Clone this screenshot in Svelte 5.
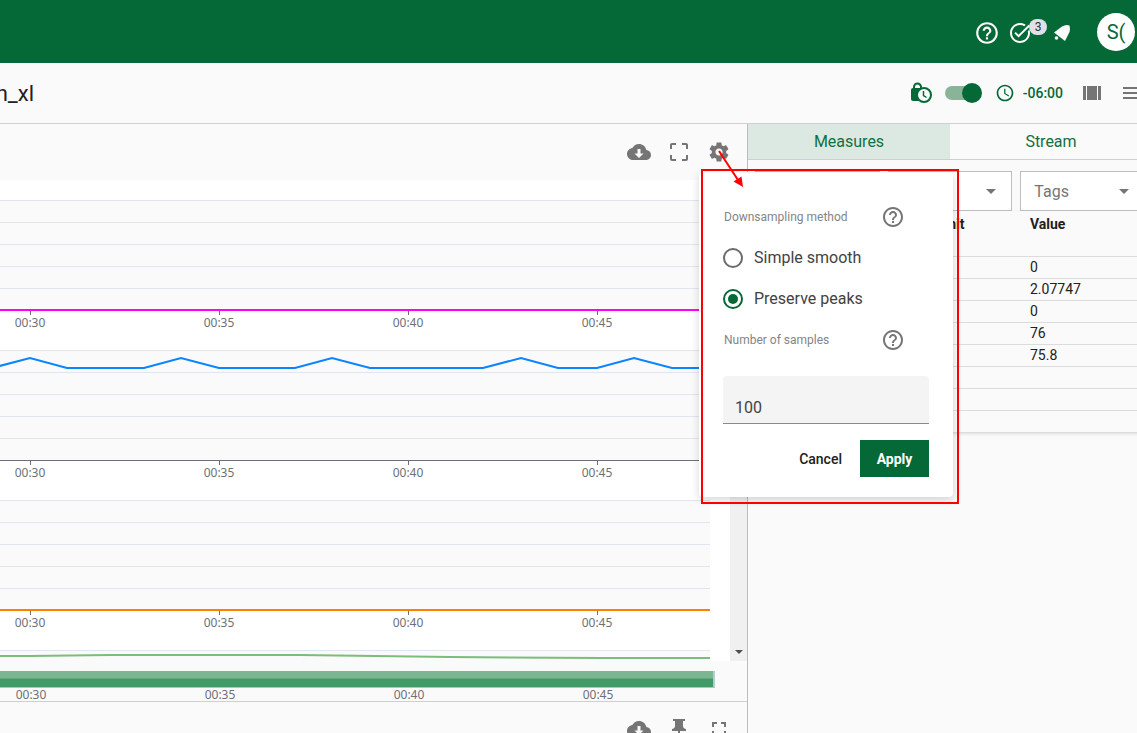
<script lang="ts">
	type Series = {
		color: string;
		points: string;
	};

	const icons = {
		help: "M11 18h2v-2h-2v2zm1-16C6.48 2 2 6.48 2 12s4.48 10 10 10 10-4.48 10-10S17.52 2 12 2zm0 18c-4.41 0-8-3.59-8-8s3.59-8 8-8 8 3.59 8 8-3.59 8-8 8zm0-14c-2.21 0-4 1.79-4 4h2c0-1.1.9-2 2-2s2 .9 2 2c0 2-3 1.75-3 5h2c0-2.25 3-2.5 3-5 0-2.21-1.79-4-4-4z",
		task: "M22 5.18L10.59 16.6l-4.24-4.24 1.41-1.41 2.83 2.83 10-10L22 5.18zm-2.21 5.04c.13.57.21 1.17.21 1.78 0 4.42-3.58 8-8 8s-8-3.58-8-8 3.58-8 8-8c1.58 0 3.04.46 4.28 1.25l1.44-1.44C16.1 2.67 14.13 2 12 2 6.48 2 2 6.48 2 12s4.48 10 10 10 10-4.48 10-10c0-1.19-.22-2.33-.6-3.39l-1.61 1.61z",
		download: "M19.35 10.04C18.67 6.59 15.64 4 12 4 9.11 4 6.6 5.64 5.35 8.04 2.34 8.36 0 10.91 0 14c0 3.31 2.69 6 6 6h13c2.76 0 5-2.24 5-5 0-2.64-2.05-4.78-4.65-4.96zM16.5 13.5L12 18l-4.5-4.5h3V9h3v4.5h3z",
		frame: "M3 5v4h2V5h4V3H5c-1.1 0-2 .9-2 2zm2 10H3v4c0 1.1.9 2 2 2h4v-2H5v-4zm14 4h-4v2h4c1.1 0 2-.9 2-2v-4h-2v4zm0-16h-4v2h4v4h2V5c0-1.1-.9-2-2-2z",
		fullscreen: "M7 14H5v5h5v-2H7v-3zm-2-4h2V7h3V5H5v5zm12 7h-3v2h5v-5h-2v3zM14 5v2h3v3h2V5h-5z",
		pin: "M16 9V4h2V2H6v2h2v5c0 1.66-1.34 3-3 3v2h6v7l1 1 1-1v-7h6v-2c-1.66 0-3-1.34-3-3z",
		settings: "M19.14 12.94c.04-.3.06-.61.06-.94 0-.32-.02-.64-.07-.94l2.03-1.58c.18-.14.23-.41.12-.61l-1.92-3.32c-.12-.22-.37-.29-.59-.22l-2.39.96c-.5-.38-1.03-.7-1.62-.94l-.36-2.54c-.04-.24-.24-.41-.48-.41h-3.84c-.24 0-.43.17-.47.41l-.36 2.54c-.59.24-1.13.57-1.62.94l-2.39-.96c-.22-.08-.47 0-.59.22L2.74 8.87c-.12.21-.08.47.12.61l2.03 1.58c-.05.3-.09.63-.09.94s.02.64.07.94l-2.03 1.58c-.18.14-.23.41-.12.61l1.92 3.32c.12.22.37.29.59.22l2.39-.96c.5.38 1.03.7 1.62.94l.36 2.54c.05.24.24.41.48.41h3.84c.24 0 .44-.17.47-.41l.36-2.54c.59-.24 1.13-.56 1.62-.94l2.39.96c.22.08.47 0 .59-.22l1.92-3.32c.12-.22.07-.47-.12-.61l-2.01-1.58zM12 15.6c-1.98 0-3.6-1.62-3.6-3.6s1.62-3.6 3.6-3.6 3.6 1.62 3.6 3.6-1.62 3.6-3.6 3.6z",
		schedule: "M11.99 2C6.47 2 2 6.48 2 12s4.47 10 9.99 10C17.52 22 22 17.52 22 12S17.52 2 11.99 2zM12 20c-4.42 0-8-3.58-8-8s3.58-8 8-8 8 3.58 8 8-3.58 8-8 8zm.5-13H11v6l5.25 3.15.75-1.23-4.5-2.67z",
	};

	const ticks = [
		{ x: 30, label: "00:30" },
		{ x: 219, label: "00:35" },
		{ x: 408, label: "00:40" },
		{ x: 597, label: "00:45" },
	];

	const series: Series[] = [
		{ color: "#ff00ff", points: "-2000,110 710,110" },
		{
			color: "#0a84ff",
			points:
				"-2000,18 -8,18 30,8 67,18 144,18 181,8 219,18 295,18 332,8 370,18 483,18 521,8 558,18 597,18 634,8 672,18 710,18",
		},
		{ color: "#ff8000", points: "-2000,110 710,110" },
		{ color: "#7bbd7b", points: "-2000,6 30,6 110,5 300,5 450,7 600,8 710,8" },
	];

	const values = ["0", "2.07747", "0", "76", "75.8", "", "", ""];
	const filters = ["", "", "Tags"];

	// charts are anchored to their right edge, where the newest samples are
	const plotRight = 710;
	let chartWidth = $state(710);
	let left = $derived(plotRight - chartWidth);

	let tab = $state("Measures");
	let method = $state("peaks");
	let samples = $state("100");
	let live = $state(true);
</script>

{#snippet icon(path: string, size = 24)}
	<svg width={size} height={size} viewBox="0 0 24 24" aria-hidden="true"><path d={path} /></svg>
{/snippet}

<div class="app">
	<header class="topbar">
		<button class="icon-button" aria-label="Help">{@render icon(icons.help, 26)}</button>
		<button class="icon-button tasks" aria-label="Tasks">
			{@render icon(icons.task)}
			<span class="badge">3</span>
		</button>
		<button class="icon-button bell" aria-label="Notifications">
			<svg width="18" height="18" viewBox="0 0 18 18" aria-hidden="true">
				<path d="M1 8.5L9 2.5Q13 0 16.5 1.5Q17.5 5 16.5 8Q14.500 12 12 17Z" />
				<circle cx="3.500" cy="14" r="1.800" />
			</svg>
		</button>
		<button class="avatar">S(</button>
	</header>

	<div class="titlebar">
		<h1>n_xl</h1>
		<div class="tools">
			<button class="icon-button green" aria-label="Lock time range">
				<svg width="22" height="22" viewBox="0 0 22 22" aria-hidden="true">
					<path d="M4 7V5a3.500 3.500 0 0 1 7 0v2" fill="none" stroke="currentColor" stroke-width="2" />
					<path d="M3 6h11l1 3-5 10H3q-2 0-2-2V8q0-2 2-2z" />
					<circle cx="14" cy="13" r="7" fill="#fafafa" stroke="currentColor" stroke-width="2" />
					<path d="M13.500 9v4.500l3 2" fill="none" stroke="currentColor" stroke-width="1.500" />
				</svg>
			</button>
			<input class="switch" type="checkbox" role="switch" aria-label="Live" bind:checked={live} />
			<button class="timezone">
				{@render icon(icons.schedule, 20)}
				<span>-06:00</span>
			</button>
			<button class="icon-button columns" aria-label="Columns">
				<svg width="18" height="14" viewBox="0 0 18 14" aria-hidden="true">
					<path d="M0 0h3v14H0zM4 0h10v14H4zM15 0h3v14h-3z" />
				</svg>
			</button>
			<button class="icon-button menu" aria-label="Menu">
				<svg width="18" height="14" viewBox="0 0 18 14" aria-hidden="true">
					<path d="M0 1h18v2H0zM0 6h18v2H0zM0 11h18v2H0z" />
				</svg>
			</button>
		</div>
	</div>

	<main class="workspace">
		<section class="charts">
			<div class="chart-tools">
				<button class="icon-button" aria-label="Download">{@render icon(icons.download)}</button>
				<button class="icon-button" aria-label="Full screen">{@render icon(icons.frame)}</button>
				<button class="icon-button" aria-label="Settings">{@render icon(icons.settings)}</button>
			</div>

			<div class="viewport">
				<div class="plots" bind:clientWidth={chartWidth}>
					{#each series as { color, points }}
						<svg class="plot" height="150" viewBox="{left} 0 {chartWidth} 150">
							<rect x={left} y="0" width={chartWidth} height="110" fill="#fafafa" />
							{#each [0, 22, 44, 66, 88] as y}
								<line class="grid" x1={left} x2={plotRight} y1={y + 0.5} y2={y + 0.5} />
							{/each}
							<line class="axis" x1={left} x2={plotRight} y1="110.5" y2="110.5" />
							{#each ticks as { x, label }}
								<line class="axis" x1={x + 0.5} x2={x + 0.5} y1="110" y2="115" />
								<text {x} y="127">{label}</text>
							{/each}
							<polyline {points} fill="none" stroke={color} stroke-width="2" />
						</svg>
					{/each}
				</div>
				<div class="scrollbar"><span class="arrow"></span></div>
			</div>

			<div class="range">
				<div class="range-track"></div>
				<svg class="range-labels" height="14" viewBox="{left} 0 {chartWidth} 14">
					{#each ticks as { x, label }}
						<text x={x + 1} y="11">{label}</text>
					{/each}
				</svg>
			</div>

			<div class="next-tools">
				<button class="icon-button" aria-label="Download">{@render icon(icons.download)}</button>
				<button class="icon-button" aria-label="Pin">{@render icon(icons.pin)}</button>
				<button class="icon-button" aria-label="Full screen">{@render icon(icons.fullscreen)}</button>
			</div>
		</section>

		<aside class="side">
			<div class="tabs" role="tablist">
				{#each ["Measures", "Stream"] as name}
					<button
						role="tab"
						class:active={tab === name}
						aria-selected={tab === name}
						onclick={() => (tab = name)}
					>
						{name}
					</button>
				{/each}
			</div>
			<div class="filters">
				{#each filters as name, i}
					<div class="filter">
						<select aria-label={name || `Filter ${i + 1}`}>
							<option>{name}</option>
						</select>
						<span class="arrow"></span>
					</div>
				{/each}
			</div>
			<table>
				<thead>
					<tr>
						<th class="name"></th>
						<th class="unit">Unit</th>
						<th>Value</th>
					</tr>
				</thead>
				<tbody>
					{#each values as value}
						<tr>
							<td></td>
							<td></td>
							<td>{value}</td>
						</tr>
					{/each}
				</tbody>
			</table>
		</aside>

		<form class="popover" onsubmit={(e) => e.preventDefault()}>
			<div class="row caption">
				<span id="method-label">Downsampling method</span>
				<button type="button" class="icon-button" aria-label="About downsampling">
					{@render icon(icons.help)}
				</button>
			</div>
			<div role="radiogroup" aria-labelledby="method-label">
				<label class="row">
					<input type="radio" name="method" value="smooth" bind:group={method} />
					Simple smooth
				</label>
				<label class="row">
					<input type="radio" name="method" value="peaks" bind:group={method} />
					Preserve peaks
				</label>
			</div>
			<div class="row caption">
				<label for="samples">Number of samples</label>
				<button type="button" class="icon-button" aria-label="About samples">
					{@render icon(icons.help)}
				</button>
			</div>
			<input id="samples" class="samples" type="text" inputmode="numeric" bind:value={samples} />
			<div class="actions">
				<button type="button" class="cancel">Cancel</button>
				<button type="submit" class="apply">Apply</button>
			</div>
		</form>

		<div class="highlight"></div>
		<svg class="pointer" width="30" height="42" viewBox="0 0 30 42" aria-hidden="true">
			<path d="M3 3L22 32" stroke="#f00" stroke-width="2" fill="none" />
			<path d="M27 39L17.500 33.500L25.500 28.500Z" fill="#f00" />
		</svg>
	</main>
</div>

<style>
	:global(body) {
		margin: 0;
	}

	.app {
		display: flex;
		flex-direction: column;
		height: 100vh;
		overflow: hidden;
		background: #fafafa;
		color: #212121;
		font-family: Roboto, sans-serif;
		font-size: 14px;
	}

	button,
	input,
	select {
		font: inherit;
		color: inherit;
		margin: 0;
		padding: 0;
		border: 0;
		background: none;
		box-sizing: border-box;
	}

	svg {
		display: block;
		fill: currentColor;
		flex: none;
	}

	.icon-button {
		display: flex;
		color: #757575;
	}

	.topbar {
		display: flex;
		flex: none;
		align-items: center;
		justify-content: flex-end;
		height: 63px;
		padding-right: 2px;
		box-sizing: border-box;
		background: #056937;
	}

	.topbar .icon-button {
		color: #fafafa;
		margin-top: 3px;
	}

	.tasks {
		position: relative;
		margin-left: 8px;
	}

	.badge {
		position: absolute;
		left: 21px;
		top: -2px;
		width: 18px;
		height: 16px;
		border-radius: 8px;
		background: #e0e0e6;
		color: #333;
		font-size: 12px;
		line-height: 16px;
	}

	.topbar .bell {
		margin-left: 21px;
	}

	.avatar {
		width: 38px;
		height: 38px;
		margin-left: 26px;
		border-radius: 50%;
		background: #fff;
		color: #056937;
		font-size: 20px;
	}

	.titlebar {
		display: flex;
		flex: none;
		align-items: center;
		justify-content: space-between;
		height: 60px;
		border-bottom: 1px solid #cfcfcf;
	}

	h1 {
		display: flex;
		justify-content: flex-end;
		width: 34px;
		margin: 0;
		font-size: 22px;
		font-weight: 400;
	}

	.tools {
		display: flex;
		align-items: center;
		margin-right: -4px;
	}

	.tools .green {
		color: #056937;
	}

	.switch {
		appearance: none;
		display: flex;
		align-items: center;
		width: 34px;
		height: 14px;
		margin-left: 13px;
		border-radius: 7px;
		background: #8ab497;
	}

	.switch::before {
		content: "";
		width: 20px;
		height: 20px;
		border-radius: 50%;
		background: #fff;
	}

	.switch:checked {
		justify-content: flex-end;
		margin-right: 3px;
	}

	.switch:checked::before {
		flex: none;
		margin-right: -3px;
		background: #056937;
	}

	.timezone {
		display: flex;
		align-items: center;
		gap: 8px;
		margin-left: 13px;
		color: #056937;
		font-weight: 500;
	}

	.columns {
		margin-left: 20px;
	}

	.menu {
		margin-left: 22px;
	}

	.workspace {
		position: relative;
		display: flex;
		flex: 1;
		min-height: 0;
	}

	.charts {
		display: flex;
		flex: 1;
		flex-direction: column;
		min-width: 0;
		border-right: 1px solid #bdbdbd;
	}

	.chart-tools,
	.next-tools {
		display: flex;
		flex: none;
		justify-content: flex-end;
		gap: 16px;
		height: 56px;
		padding: 16px 16px 0;
		box-sizing: border-box;
	}

	.next-tools {
		height: 32px;
		padding-top: 15px;
		border-top: 1px solid #cfcfcf;
		overflow: hidden;
	}

	.viewport {
		display: flex;
		flex: 1;
		min-height: 0;
		overflow: hidden;
		background: #fff;
	}

	.plots {
		flex: 1;
		min-width: 0;
		margin: 20px 20px 0 0;
	}

	.plot,
	.range-labels {
		width: 100%;
	}

	.plot text,
	.range-labels text {
		fill: #6e7079;
		font-family: "Noto Sans", sans-serif;
		font-size: 12px;
		text-anchor: middle;
	}

	.grid {
		stroke: #e0e6f1;
	}

	.axis {
		stroke: #6e7079;
	}

	.scrollbar {
		display: flex;
		align-items: flex-end;
		justify-content: center;
		width: 17px;
		padding-bottom: 7px;
		box-sizing: border-box;
		background: #f0f0f0;
	}

	.arrow {
		border: 5px solid transparent;
		border-top-color: #757575;
		border-bottom: 0;
	}

	.scrollbar .arrow {
		border-width: 4px 4px 0;
		border-top-color: #505050;
	}

	.range {
		flex: none;
		height: 40px;
		padding: 10px 37px 0 0;
		box-sizing: border-box;
	}

	.range-track {
		height: 17px;
		margin-right: -5px;
		border-right: 2px solid #b5cdc8;
		border-bottom: 1px solid #a6ccb9;
		box-sizing: border-box;
		background: linear-gradient(#7bb592 7px, #62a581 7px 8px, #429a66 8px);
	}

	.side {
		flex: 0 0 389px;
		overflow: hidden;
	}

	/* the panel runs on past the window's right edge */
	.tabs,
	.filters,
	table {
		width: 404px;
	}

	.tabs {
		display: flex;
		height: 36px;
		border-bottom: 1px solid #cfcfcf;
		box-sizing: border-box;
	}

	.tabs button {
		flex: 1;
		color: #13703f;
		font-size: 16px;
	}

	.tabs .active {
		background: #dbe9e2;
	}

	.filters {
		display: flex;
		gap: 8px;
		padding: 11px 7px 0;
		box-sizing: border-box;
	}

	.filter {
		display: flex;
		flex: 1;
		align-items: center;
		height: 40px;
		padding-right: 15px;
		border: 1px solid #bdbdbd;
		box-sizing: border-box;
		background: #fff;
	}

	.filter select {
		appearance: none;
		flex: 1;
		min-width: 0;
		height: 100%;
		padding-left: 13px;
		color: #757575;
		font-size: 16px;
	}

	table {
		table-layout: fixed;
		border-collapse: collapse;
		border-bottom: 1px solid #dcdcdc;
		box-shadow: 0 1px 3px rgba(0, 0, 0, 0.12);
		text-align: left;
	}

	th {
		height: 45px;
		padding: 4px 0 0;
		box-sizing: border-box;
		font-weight: 700;
		line-height: 18px;
		vertical-align: top;
	}

	td {
		height: 22px;
		padding: 0;
		border-top: 1px solid #dcdcdc;
		box-sizing: border-box;
		line-height: 18px;
	}

	.name {
		width: 191px;
	}

	.unit {
		width: 91px;
	}

	.popover {
		position: absolute;
		top: 48px;
		right: 184px;
		width: 254px;
		padding: 24px 24px 20px;
		border-radius: 4px;
		box-sizing: border-box;
		background: #fff;
		box-shadow: 0 3px 8px rgba(0, 0, 0, 0.16);
		color: #424242;
	}

	.row {
		display: flex;
		align-items: center;
		height: 41px;
		gap: 11px;
		font-size: 16px;
	}

	.row input {
		appearance: none;
		display: grid;
		place-items: center;
		width: 20px;
		height: 20px;
		border: 2px solid #6b6b6b;
		border-radius: 50%;
	}

	.row input:checked {
		border-color: #056937;
	}

	.row input:checked::before {
		content: "";
		width: 10px;
		height: 10px;
		border-radius: 50%;
		background: #056937;
	}

	.caption {
		justify-content: space-between;
		padding: 0 24px 0 1px;
		color: #858585;
		font-size: 12px;
	}

	.samples {
		display: block;
		width: 100%;
		height: 48px;
		margin-top: 16px;
		padding: 16px 12px 0;
		border-bottom: 1px solid #8a8a8a;
		border-radius: 4px 4px 0 0;
		background: #f4f4f4;
		font-size: 16px;
	}

	.actions {
		display: flex;
		justify-content: flex-end;
		gap: 18px;
		margin-top: 16px;
	}

	.actions button {
		height: 37px;
		font-weight: 500;
		color: #212121;
	}

	.actions .apply {
		width: 69px;
		background: #056937;
		color: #fff;
		font-weight: 700;
	}

	.highlight {
		position: absolute;
		top: 45px;
		right: 178px;
		width: 258px;
		height: 335px;
		border: 2px solid #f00;
		box-sizing: border-box;
		pointer-events: none;
	}

	.pointer {
		position: absolute;
		top: 24px;
		right: 391px;
		pointer-events: none;
	}
</style>
